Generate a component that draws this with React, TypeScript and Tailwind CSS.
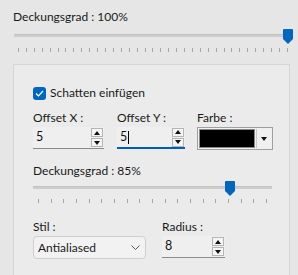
import React from "react";

function Ticks({ n, className }: { n: number; className: string }) {
  return (
    <div className={`flex justify-between ${className}`}>
      {Array.from({ length: n }).map((_, i) => (
        <div key={i} className="w-px h-[4px] bg-[#a6a6a6]" />
      ))}
    </div>
  );
}

function Thumb({ className }: { className: string }) {
  return (
    <svg className={`absolute top-[-5px] ${className}`} width="10" height="15" viewBox="0 0 10 15">
      <path d="M1 0 H9 Q10 0 10 1 V10 L5 15 L0 10 V1 Q0 0 1 0 Z" fill="#0067c0" />
    </svg>
  );
}

function SpinButtons() {
  return (
    <div className="flex flex-col gap-[1px] mr-[1px]">
      <div className="w-[12px] h-[9px] border border-[#b4b4b4] bg-[#f5f5f5] flex items-center justify-center">
        <svg width="6" height="4" viewBox="0 0 6 4">
          <path d="M0 4 L3 0 L6 4 Z" fill="#111" />
        </svg>
      </div>
      <div className="w-[12px] h-[9px] border border-[#b4b4b4] bg-[#f5f5f5] flex items-center justify-center">
        <svg width="6" height="4" viewBox="0 0 6 4">
          <path d="M0 0 L3 4 L6 0 Z" fill="#111" />
        </svg>
      </div>
    </div>
  );
}

function SpinBox({ value, width, focused }: { value: string; width: string; focused?: boolean }) {
  return (
    <div
      className={`${width} h-[22px] flex items-center justify-between bg-[#efefef] ${
        focused ? "border-b-2 border-[#005fb8]" : "border-b border-[#8c8c8c]"
      }`}
    >
      <div className="pl-[3px] text-[12.5px] text-[#111] flex items-center leading-none">
        {value}
        {focused && <span className="inline-block w-px h-[13px] bg-black ml-[1px]" />}
      </div>
      <SpinButtons />
    </div>
  );
}

export default function App() {
  return (
    <div className="w-[298px] h-[275px] bg-[#e6e6e6] overflow-hidden text-[#1a1a1a] text-[12px] font-['Lato',sans-serif]">
      <div className="pl-[13px] pt-[9px] leading-[16px]">Deckungsgrad : 100%</div>
      <div className="relative ml-[14px] w-[276px] mt-[9px]">
        <div className="h-[3px] bg-[#cdcdcd] border-t border-[#c2c2c2]" />
        <Thumb className="left-[269px]" />
        <Ticks n={35} className="mt-[11px] pl-[4px] pr-[2px]" />
      </div>

      <div className="ml-[13px] mt-[12px] w-[277px] h-[230px] bg-[#ebebeb] border border-[#d6d6d6] pl-[19px] pt-[21px]">
        <div className="flex items-center gap-[4px] h-[14px]">
          <div className="w-[13px] h-[13px] rounded-[3px] bg-[#0067c0] flex items-center justify-center">
            <svg width="9" height="7" viewBox="0 0 9 7">
              <path d="M1 3.5 L3.5 6 L8 1" stroke="#fff" strokeWidth="1.2" fill="none" />
            </svg>
          </div>
          <span>Schatten einfügen</span>
        </div>

        <div className="flex mt-[10px]">
          <div className="w-[84px]">
            <div className="leading-[16px]">Offset X :</div>
            <div className="mt-[1px]">
              <SpinBox value="5" width="w-[71px]" />
            </div>
          </div>
          <div className="w-[80px]">
            <div className="leading-[16px]">Offset Y :</div>
            <div className="mt-[1px]">
              <SpinBox value="5" width="w-[68px]" focused />
            </div>
          </div>
          <div>
            <div className="leading-[16px]">Farbe :</div>
            <div className="mt-[1px] w-[76px] h-[23px] border border-[#a0a0a0] p-[1px] flex bg-[#f0f0f0]">
              <div className="w-[56px] h-full bg-black border border-[#888]" />
              <div className="flex-1 flex items-center justify-center border-l border-[#c8c8c8] ml-[1px]">
                <svg width="6" height="4" viewBox="0 0 6 4">
                  <path d="M0 0 L3 4 L6 0 Z" fill="#111" />
                </svg>
              </div>
            </div>
          </div>
        </div>

        <div className="mt-[13px] leading-[16px]">Deckungsgrad : 85%</div>
        <div className="relative w-[239px] mt-[7px]">
          <div className="h-[3px] bg-[#cdcdcd] border-t border-[#c2c2c2]" />
          <Thumb className="left-[192px]" />
          <Ticks n={19} className="mt-[10px] pl-[5px] pr-[5px]" />
        </div>

        <div className="flex mt-[16px]">
          <div className="w-[129px]">
            <div className="leading-[16px]">Stil :</div>
            <div className="mt-[1px] w-[113px] h-[23px] rounded-[4px] border border-[#cfcfcf] bg-[#f2f2f2] flex items-center justify-between pl-[4px] pr-[5px]">
              <span>Antialiased</span>
              <svg width="9" height="5" viewBox="0 0 9 5">
                <path d="M0.5 0.5 L4.5 4.5 L8.5 0.5" stroke="#555" strokeWidth="1" fill="none" />
              </svg>
            </div>
          </div>
          <div>
            <div className="leading-[16px]">Radius :</div>
            <div className="mt-[1px]">
              <SpinBox value="8" width="w-[63px]" />
            </div>
          </div>
        </div>
      </div>
    </div>
  );
}
